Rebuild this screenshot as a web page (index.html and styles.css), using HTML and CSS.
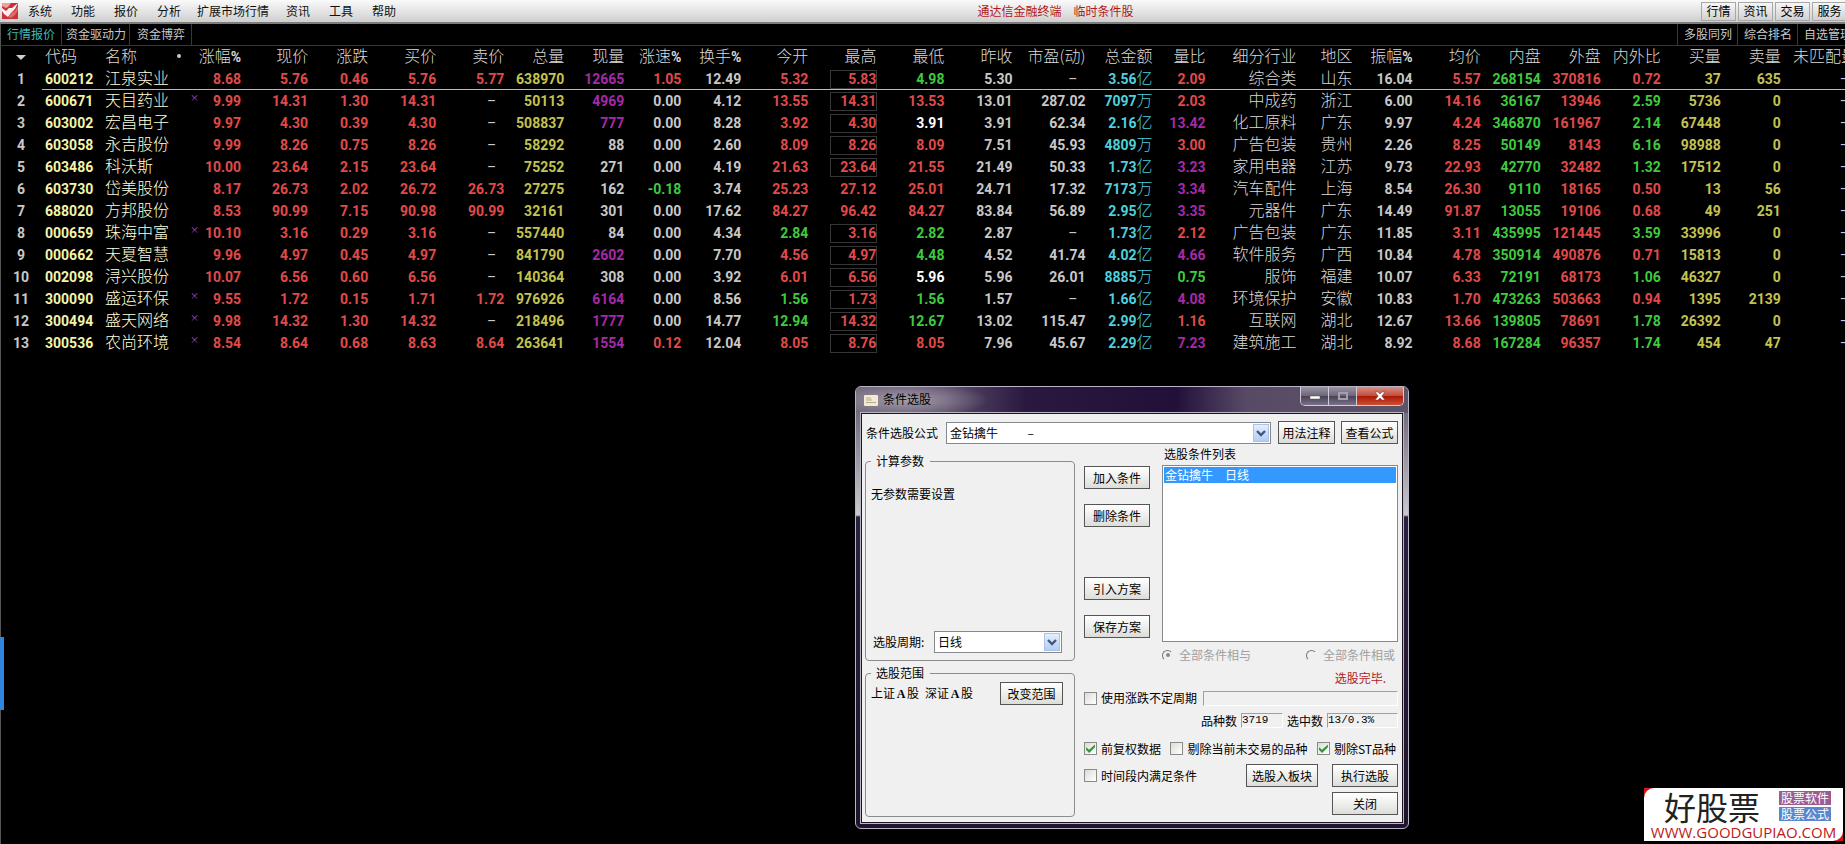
FILE: index.html
```html
<!DOCTYPE html>
<html lang="zh-CN">
<head>
<meta charset="utf-8">
<title>通达信金融终端 临时条件股</title>
<link rel="stylesheet" href="styles.css">
</head>
<body>
<header class="topbar">
  <svg class="logo" viewBox="0 0 16 16" aria-hidden="true"><rect width="16" height="16" fill="#c8333a"/><path d="M0 0h9L6 4 4 5 0 3z" fill="#e9a3a3"/><path d="M0 5l4 3 3-3 3 0 6-5-3 6-4 4-3 4-4-3-2-3z" fill="#fbeeee"/><path d="M6 14l3-4 4-2 3-5v4l-3 5-4 3z" fill="#e06a6a"/></svg>
  <nav class="menu">
    <a href="#">系统</a><a href="#">功能</a><a href="#">报价</a><a href="#">分析</a><a class="market" href="#">扩展市场行情</a><a href="#">资讯</a><a href="#">工具</a><a href="#">帮助</a>
  </nav>
  <div class="caption"><span>通达信金融终端</span><span>临时条件股</span></div>
  <div class="quick">
    <button type="button">行情</button><button type="button">资讯</button><button type="button">交易</button><button type="button">服务</button>
  </div>
</header>
<nav class="tabs">
  <div class="tabs-left"><a class="active" href="#">行情报价</a><a href="#">资金驱动力</a><a href="#">资金博弈</a></div>
  <div class="tabs-right"><a href="#">多股同列</a><a href="#">综合排名</a><a href="#">自选管理</a></div>
</nav>
<main class="desk">
<table class="quotes">
<colgroup><col class="w42"><col class="w60"><col class="w97"><col class="w42"><col class="w67"><col class="w60"><col class="w68"><col class="w68"><col class="w60"><col class="w60"><col class="w57"><col class="w60"><col class="w67"><col class="w68"><col class="w68"><col class="w68"><col class="w73"><col class="w67"><col class="w53"><col class="w91"><col class="w56"><col class="w60"><col class="w68"><col class="w60"><col class="w60"><col class="w60"><col class="w60"><col class="w60"><col class="w76"></colgroup>
<thead><tr><th><i class="tri"></i></th><th>代码</th><th>名称<i class="dot"></i></th><th>涨幅<b>%</b></th><th>现价</th><th>涨跌</th><th>买价</th><th>卖价</th><th>总量</th><th>现量</th><th>涨速<b>%</b></th><th>换手<b>%</b></th><th>今开</th><th>最高</th><th>最低</th><th>昨收</th><th>市盈(动)</th><th>总金额</th><th>量比</th><th>细分行业</th><th>地区</th><th>振幅<b>%</b></th><th>均价</th><th>内盘</th><th>外盘</th><th>内外比</th><th>买量</th><th>卖量</th><th>未匹配量</th></tr></thead>
<tbody>
<tr class="current"><td>1</td><td>600212</td><td>江泉实业</td><td>8.68</td><td>5.76</td><td>0.46</td><td>5.76</td><td>5.77</td><td>638970</td><td class="m">12665</td><td class="r">1.05</td><td>12.49</td><td>5.32</td><td><span class="box">5.83</span></td><td class="g">4.98</td><td>5.30</td><td class="d">–</td><td>3.56<i>亿</i></td><td>2.09</td><td>综合类</td><td>山东</td><td>16.04</td><td>5.57</td><td>268154</td><td>370816</td><td class="r">0.72</td><td>37</td><td>635</td><td class="d">–</td></tr>
<tr><td>2</td><td>600671</td><td>天目药业<sup>×</sup></td><td>9.99</td><td>14.31</td><td>1.30</td><td>14.31</td><td class="d">–</td><td>50113</td><td class="m">4969</td><td>0.00</td><td>4.12</td><td>13.55</td><td><span class="box">14.31</span></td><td>13.53</td><td>13.01</td><td>287.02</td><td>7097<i>万</i></td><td>2.03</td><td>中成药</td><td>浙江</td><td>6.00</td><td>14.16</td><td>36167</td><td>13946</td><td>2.59</td><td>5736</td><td>0</td><td class="d">–</td></tr>
<tr><td>3</td><td>603002</td><td>宏昌电子</td><td>9.97</td><td>4.30</td><td>0.39</td><td>4.30</td><td class="d">–</td><td>508837</td><td class="m">777</td><td>0.00</td><td>8.28</td><td>3.92</td><td><span class="box">4.30</span></td><td class="w">3.91</td><td>3.91</td><td>62.34</td><td>2.16<i>亿</i></td><td class="m">13.42</td><td>化工原料</td><td>广东</td><td>9.97</td><td>4.24</td><td>346870</td><td>161967</td><td>2.14</td><td>67448</td><td>0</td><td class="d">–</td></tr>
<tr><td>4</td><td>603058</td><td>永吉股份</td><td>9.99</td><td>8.26</td><td>0.75</td><td>8.26</td><td class="d">–</td><td>58292</td><td>88</td><td>0.00</td><td>2.60</td><td>8.09</td><td><span class="box">8.26</span></td><td>8.09</td><td>7.51</td><td>45.93</td><td>4809<i>万</i></td><td>3.00</td><td>广告包装</td><td>贵州</td><td>2.26</td><td>8.25</td><td>50149</td><td>8143</td><td>6.16</td><td>98988</td><td>0</td><td class="d">–</td></tr>
<tr><td>5</td><td>603486</td><td>科沃斯</td><td>10.00</td><td>23.64</td><td>2.15</td><td>23.64</td><td class="d">–</td><td>75252</td><td>271</td><td>0.00</td><td>4.19</td><td>21.63</td><td><span class="box">23.64</span></td><td>21.55</td><td>21.49</td><td>50.33</td><td>1.73<i>亿</i></td><td class="m">3.23</td><td>家用电器</td><td>江苏</td><td>9.73</td><td>22.93</td><td>42770</td><td>32482</td><td>1.32</td><td>17512</td><td>0</td><td class="d">–</td></tr>
<tr><td>6</td><td>603730</td><td>岱美股份</td><td>8.17</td><td>26.73</td><td>2.02</td><td>26.72</td><td>26.73</td><td>27275</td><td>162</td><td class="g">-0.18</td><td>3.74</td><td>25.23</td><td>27.12</td><td>25.01</td><td>24.71</td><td>17.32</td><td>7173<i>万</i></td><td class="m">3.34</td><td>汽车配件</td><td>上海</td><td>8.54</td><td>26.30</td><td>9110</td><td>18165</td><td class="r">0.50</td><td>13</td><td>56</td><td class="d">–</td></tr>
<tr><td>7</td><td>688020</td><td>方邦股份</td><td>8.53</td><td>90.99</td><td>7.15</td><td>90.98</td><td>90.99</td><td>32161</td><td>301</td><td>0.00</td><td>17.62</td><td>84.27</td><td>96.42</td><td>84.27</td><td>83.84</td><td>56.89</td><td>2.95<i>亿</i></td><td class="m">3.35</td><td>元器件</td><td>广东</td><td>14.49</td><td>91.87</td><td>13055</td><td>19106</td><td class="r">0.68</td><td>49</td><td>251</td><td class="d">–</td></tr>
<tr><td>8</td><td>000659</td><td>珠海中富<sup>×</sup></td><td>10.10</td><td>3.16</td><td>0.29</td><td>3.16</td><td class="d">–</td><td>557440</td><td>84</td><td>0.00</td><td>4.34</td><td class="g">2.84</td><td><span class="box">3.16</span></td><td class="g">2.82</td><td>2.87</td><td class="d">–</td><td>1.73<i>亿</i></td><td>2.12</td><td>广告包装</td><td>广东</td><td>11.85</td><td>3.11</td><td>435995</td><td>121445</td><td>3.59</td><td>33996</td><td>0</td><td class="d">–</td></tr>
<tr><td>9</td><td>000662</td><td>天夏智慧</td><td>9.96</td><td>4.97</td><td>0.45</td><td>4.97</td><td class="d">–</td><td>841790</td><td class="m">2602</td><td>0.00</td><td>7.70</td><td>4.56</td><td><span class="box">4.97</span></td><td class="g">4.48</td><td>4.52</td><td>41.74</td><td>4.02<i>亿</i></td><td class="m">4.66</td><td>软件服务</td><td>广西</td><td>10.84</td><td>4.78</td><td>350914</td><td>490876</td><td class="r">0.71</td><td>15813</td><td>0</td><td class="d">–</td></tr>
<tr><td>10</td><td>002098</td><td>浔兴股份</td><td>10.07</td><td>6.56</td><td>0.60</td><td>6.56</td><td class="d">–</td><td>140364</td><td>308</td><td>0.00</td><td>3.92</td><td>6.01</td><td><span class="box">6.56</span></td><td class="w">5.96</td><td>5.96</td><td>26.01</td><td>8885<i>万</i></td><td class="g">0.75</td><td>服饰</td><td>福建</td><td>10.07</td><td>6.33</td><td>72191</td><td>68173</td><td>1.06</td><td>46327</td><td>0</td><td class="d">–</td></tr>
<tr><td>11</td><td>300090</td><td>盛运环保<sup>×</sup></td><td>9.55</td><td>1.72</td><td>0.15</td><td>1.71</td><td>1.72</td><td>976926</td><td class="m">6164</td><td>0.00</td><td>8.56</td><td class="g">1.56</td><td><span class="box">1.73</span></td><td class="g">1.56</td><td>1.57</td><td class="d">–</td><td>1.66<i>亿</i></td><td class="m">4.08</td><td>环境保护</td><td>安徽</td><td>10.83</td><td>1.70</td><td>473263</td><td>503663</td><td class="r">0.94</td><td>1395</td><td>2139</td><td class="d">–</td></tr>
<tr><td>12</td><td>300494</td><td>盛天网络<sup>×</sup></td><td>9.98</td><td>14.32</td><td>1.30</td><td>14.32</td><td class="d">–</td><td>218496</td><td class="m">1777</td><td>0.00</td><td>14.77</td><td class="g">12.94</td><td><span class="box">14.32</span></td><td class="g">12.67</td><td>13.02</td><td>115.47</td><td>2.99<i>亿</i></td><td>1.16</td><td>互联网</td><td>湖北</td><td>12.67</td><td>13.66</td><td>139805</td><td>78691</td><td>1.78</td><td>26392</td><td>0</td><td class="d">–</td></tr>
<tr><td>13</td><td>300536</td><td>农尚环境<sup>×</sup></td><td>8.54</td><td>8.64</td><td>0.68</td><td>8.63</td><td>8.64</td><td>263641</td><td class="m">1554</td><td class="r">0.12</td><td>12.04</td><td>8.05</td><td><span class="box">8.76</span></td><td>8.05</td><td>7.96</td><td>45.67</td><td>2.29<i>亿</i></td><td class="m">7.23</td><td>建筑施工</td><td>湖北</td><td>8.92</td><td>8.68</td><td>167284</td><td>96357</td><td>1.74</td><td>454</td><td>47</td><td class="d">–</td></tr>
</tbody>
</table>
</main>
<div class="side-handle"></div>

<section class="dialog" role="dialog" aria-labelledby="dlg-title">
  <header class="titlebar">
    <svg class="dlg-icon" viewBox="0 0 14 11" aria-hidden="true"><rect width="14" height="11" rx="1" fill="#f4ead2"/><path d="M2 3h5M2 5h6M2 7.500h10" stroke="#b9a888" fill="none"/></svg>
    <h1 id="dlg-title">条件选股</h1>
    <div class="winbtns">
      <button type="button" class="min" aria-label="最小化"><svg viewBox="0 0 12 10"><rect x="1" y="5" width="10" height="3" fill="#fff" stroke="#554" stroke-width=".5"/></svg></button>
      <button type="button" class="max" aria-label="最大化"><svg viewBox="0 0 12 10"><rect x="2" y="2" width="8" height="6" fill="none" stroke="#a39fa9" stroke-width="2"/></svg></button>
      <button type="button" class="close" aria-label="关闭窗口"><svg viewBox="0 0 12 10"><path d="M1 1h3l2 2 2-2h3L7.800 5 11 9H8L6 7 4 9H1l3.200-4z" fill="#fff" stroke="#733" stroke-width=".5"/></svg></button>
    </div>
  </header>
  <form class="body">
    <div class="formula">
      <label for="formula">条件选股公式</label>
      <div class="combo"><select id="formula"><option>金钻擒牛&nbsp;&nbsp;&nbsp;&nbsp;&nbsp;&nbsp;&nbsp;&nbsp;&nbsp;&nbsp;&nbsp;–</option></select><span class="arrow"><svg viewBox="0 0 10 8"><path d="M1 2l4 4 4-4" fill="none" stroke="#41577c" stroke-width="2.400"/></svg></span></div>
      <button type="button">用法注释</button>
      <button type="button">查看公式</button>
    </div>
    <div class="columns">
      <div class="left">
        <fieldset class="params">
          <legend>计算参数</legend>
          <p>无参数需要设置</p>
          <div class="period"><label for="period">选股周期:</label>
          <div class="combo"><select id="period"><option>日线</option></select><span class="arrow"><svg viewBox="0 0 10 8"><path d="M1 2l4 4 4-4" fill="none" stroke="#41577c" stroke-width="2.400"/></svg></span></div></div>
        </fieldset>
        <fieldset class="range">
          <legend>选股范围</legend>
          <div class="range-row"><p>上证<b>A</b>股</p><p>深证<b>A</b>股</p><button type="button">改变范围</button></div>
        </fieldset>
      </div>
      <div class="right">
        <div class="picker">
          <div class="actions">
            <button type="button">加入条件</button><button type="button">删除条件</button><button type="button" class="apart">引入方案</button><button type="button">保存方案</button>
          </div>
          <div class="conditions">
            <h2>选股条件列表</h2>
            <ul><li><span>金钻擒牛</span><span>日线</span></li></ul>
            <div class="radios"><label><input type="radio" name="mode" checked disabled>全部条件相与</label><label><input type="radio" name="mode" disabled>全部条件相或</label></div>
          </div>
        </div>
        <p class="done">选股完毕.</p>
        <div class="cycle"><label><input type="checkbox">使用涨跌不定周期</label><output class="sunk wide"></output></div>
        <div class="counts"><span>品种数</span><output class="sunk total">3719</output><span>选中数</span><output class="sunk hits">13/0.3%</output></div>
        <div class="options"><label><input type="checkbox" checked>前复权数据</label><label><input type="checkbox">剔除当前未交易的品种</label><label><input type="checkbox" checked>剔除ST品种</label></div>
        <div class="run"><label><input type="checkbox">时间段内满足条件</label><button type="button" class="block">选股入板块</button><button type="button">执行选股</button></div>
        <div class="run end"><button type="button">关闭</button></div>
      </div>
    </div>
  </form>
</section>

<aside class="brand">
  <div class="brand-card">
    <div class="brand-top"><strong>好股票</strong><div class="tags"><span>股票软件</span><span>股票公式</span></div></div>
    <div class="url">WWW.GOODGUPIAO.COM</div>
  </div>
</aside>
</body>
</html>
```
FILE: styles.css
```css
* { box-sizing: border-box; }
html, body { margin: 0; height: 100%; }
body {
  background: #000;
  color: #c8c8c8;
  font: 12px/16px "Noto Sans CJK SC", sans-serif;
  overflow: hidden;
  position: relative;
}
a { color: inherit; text-decoration: none; }
button, select, input { font: inherit; color: #000; margin: 0; }
p, h1, h2, ul { margin: 0; padding: 0; font: inherit; list-style: none; }
i { font-style: normal; }

/* menu bar */
.topbar {
  display: flex;
  align-items: center;
  height: 24px;
  padding-left: 2px;
  background: linear-gradient(#fafafa, #cfcfcf);
  border-bottom: 2px solid #7c7c7c;
  color: #111;
  overflow: hidden;
}
.logo { width: 16px; height: 16px; }
.menu { display: flex; margin-left: 1px; }
.menu a { padding: 0 10px 0 9px; }
.menu .market { padding: 0 8px 0 6px; }
.caption { flex: 1; display: flex; justify-content: center; gap: 12px; padding-left: 4px; color: #b01818; }
.quick { display: flex; gap: 2px; margin-right: -2px; }
.quick button {
  width: 35px;
  height: 19px;
  padding: 0;
  line-height: 16px;
  border: 1px solid #a8a8a8;
  background: linear-gradient(#f6f6f6, #d0d0d0);
}

/* tab strip */
.tabs {
  display: flex;
  justify-content: space-between;
  height: 22px;
  border-left: 1px solid #555;
  border-bottom: 1px solid #7a1a1c;
  overflow: hidden;
}
.tabs-left, .tabs-right { display: flex; line-height: 20px; }
.tabs-left a { padding: 0 3px 0 4px; border-right: 1px solid #7a1a1c; }
.tabs-left a:first-child { padding: 0 6px; }
.tabs-left a:last-child { padding: 0 6px 0 7px; }
.tabs-right { margin-right: -12px; }
.tabs-right a { padding: 0 5px 0 6px; border-left: 1px solid #7a1a1c; }
.tabs .active { color: #3fb8b8; }

/* quote table */
.desk { border-left: 1px solid #555; height: calc(100% - 46px); overflow: hidden; }
.quotes {
  width: calc(100% + 13px);
  margin-left: -1px;
  table-layout: fixed;
  border-collapse: separate;
  border-spacing: 0;
  white-space: nowrap;
}
.w42 { width: 42px; } .w53 { width: 53px; } .w56 { width: 56px; } .w57 { width: 57px; }
.w60 { width: 60px; } .w67 { width: 67px; } .w68 { width: 68px; } .w73 { width: 73px; }
.w76 { width: 76px; } .w91 { width: 91px; } .w97 { width: 97px; }
.quotes th, .quotes td { padding: 0; text-align: right; height: 22px; line-height: 20px; }
.quotes th { height: 22px; line-height: 19px; vertical-align: top; font-size: 16px; font-weight: 300; color: #dadada; }
.quotes th:nth-child(4) { text-indent: -4px; }
.quotes th b { font: bold 14px/14px Roboto, sans-serif; }
.quotes td { font-family: Roboto, "Noto Sans CJK SC", sans-serif; font-size: 14px; font-weight: 700; }
.quotes td i { font-size: 16px; font-weight: 300; line-height: 16px; }
.quotes tr > :nth-child(1) { text-align: center; }
.quotes tr > :nth-child(2), .quotes tr > :nth-child(3) { text-align: left; padding-left: 3px; }
.quotes td:nth-child(2) { color: #f4f4a8; }
.quotes td:nth-child(3), .quotes td:nth-child(20), .quotes td:nth-child(21) { font-size: 16px; font-weight: 300; color: #dadada; }
.quotes td:nth-child(3) { color: #ffffdc; }
.quotes td:nth-child(n+4):nth-child(-n+8),
.quotes td:nth-child(n+13):nth-child(-n+15),
.quotes td:nth-child(19), .quotes td:nth-child(23), .quotes td:nth-child(25), .quotes td.r { color: #e24a4a; }
.quotes td:nth-child(9), .quotes td:nth-child(27), .quotes td:nth-child(28) { color: #c3c350; }
.quotes td:nth-child(18) { color: #4ed0dc; }
.quotes td:nth-child(24), .quotes td:nth-child(26) { color: #3ecb3e; }
.quotes td:nth-child(26).r { color: #e24a4a; }
.quotes td:nth-child(n).g { color: #3ecb3e; }
.quotes td:nth-child(n).m { color: #a828a8; }
.quotes td:nth-child(n).w { color: #fff; }
.quotes td:nth-child(n).d { color: #c8c8c8; padding-right: 8px; font-weight: 400; }
.current td:nth-child(n+2) { border-bottom: 1px solid #c0c090; }
.quotes sup { float: right; font: 9px/13px "Noto Sans CJK SC", sans-serif; color: #b84cc8; }
.box { display: inline-block; width: 47px; height: 19px; margin-right: -1px; line-height: 17px; border: 1px solid #363636; vertical-align: middle; }
.tri { display: inline-block; border: 5px solid transparent; border-top-color: #d0d0d0; border-bottom: 0; vertical-align: middle; }
.dot { float: right; width: 4px; height: 4px; margin: 8px 18px 0 0; border-radius: 2px; background: #c8c8c8; }

.side-handle { position: absolute; left: 0; top: 637px; width: 4px; height: 73px; background: #2f86dc; }

/* dialog window */
.dialog {
  position: absolute;
  left: 855px;
  top: 386px;
  width: 554px;
  padding: 0 5px 5px;
  border: 1px solid #bab4c6;
  border-radius: 6px;
  background: linear-gradient(#5c5468, #77707f 30px, #c9c9d0 128px, #2a2040 130px, #1e142c);
  color: #000;
}
.titlebar {
  display: flex;
  align-items: flex-start;
  height: 26px;
  margin: 0 -5px;
  padding: 0 4px 0 8px;
  border-radius: 5px 5px 0 0;
  background:
    radial-gradient(ellipse 80px 18px at 52px 13px, #b4aebbcc, #b4aebb00),
    linear-gradient(90deg, #6d6678, #5a4d68 90px, #2a1840 170px, #22103a 320px, #584a66 390px, #5c5468);
}
.dlg-icon { width: 14px; height: 11px; margin-top: 8px; }
.titlebar h1 { flex: 1; margin: 4px 0 0 5px; }
.winbtns { display: flex; border: 1px solid #d0ccd6; border-top: 0; border-radius: 0 0 5px 5px; overflow: hidden; }
.winbtns button { width: 28px; height: 18px; padding: 0; border: 0; border-right: 1px solid #d0ccd6; background: linear-gradient(#9a94a4, #6c6478 50%, #4a4058 51%, #7a7288); line-height: 0; }
.winbtns .close { width: 46px; border-right: 0; background: linear-gradient(#d89084, #c04a38 50%, #a81808 51%, #d05030); }
.winbtns svg { width: 12px; height: 10px; }
.body {
  padding: 6px 4px 5px 3px;
  border: 1px solid #1c1424;
  outline: 1px solid #b8b4c0;
  background: #f0f0f0;
}
.body button {
  height: 23px;
  padding: 0;
  border: 1px solid #555;
  background: linear-gradient(#fff, #f2f2f0 40%, #dcdcd8);
  line-height: 20px;
}
.combo { display: grid; height: 22px; border: 1px solid #84898e; background: #fff; }
.combo select { grid-area: 1 / 1; width: 100%; padding: 0 3px; border: 0; background: none; appearance: none; }
.arrow {
  grid-area: 1 / 1;
  justify-self: end;
  align-self: center;
  display: grid;
  place-items: center;
  width: 16px;
  height: 18px;
  margin-right: 1px;
  border: 1px solid #a9c3ea;
  background: linear-gradient(#e4eefc, #b4cdf2);
  pointer-events: none;
}
.arrow svg { width: 10px; height: 8px; }
.formula { display: flex; align-items: center; gap: 6px; padding-left: 1px; height: 25px; }
.formula .combo { flex: 1; margin: 1px 1px 0 2px; }
.formula button { width: 57px; }
.columns { display: grid; grid-template-columns: 210px 1fr; gap: 9px; }
.left { display: flex; flex-direction: column; gap: 4px; padding-top: 8px; }
fieldset { margin: 0; padding: 0 5px; border: 1px solid #8c8c8c; border-radius: 4px; min-width: 0; }
legend { height: 16px; padding: 0 6px 0 5px; }
.params { display: flex; flex-direction: column; height: 208px; }
.params p { margin-top: 17px; }
.period { display: flex; align-items: center; gap: 4px; margin-top: 129px; padding: 0 7px 0 2px; }
.period .combo { flex: 0 0 128px; margin-left: auto; }
.range { height: 152px; }
.range-row { display: flex; align-items: center; gap: 6px; margin-top: 1px; }
.range-row b { display: inline-block; width: 12px; text-align: center; font: bold 12px "Liberation Serif", serif; }
.range-row button { width: 63px; margin-left: auto; margin-right: 6px; }
.picker { display: grid; grid-template-columns: 66px 1fr; gap: 12px; }
.actions { display: flex; flex-direction: column; gap: 15px; padding-top: 21px; }
.actions .apart { margin-top: 35px; }
.conditions h2 { height: 20px; padding: 1px 0 0 2px; }
.conditions ul { height: 177px; padding: 1px; border: 1px solid #84898e; background: #fff; }
.conditions li { display: flex; gap: 12px; padding-left: 1px; background: #3399ff; color: #fff; }
.radios { display: flex; justify-content: space-between; align-items: center; height: 26px; padding-right: 3px; color: #a0a0a0; }
label { white-space: nowrap; }
.right label { display: flex; align-items: center; }
.right input { appearance: none; flex: none; display: grid; place-items: center; width: 13px; height: 13px; margin-right: 4px; border: 1px solid #8a8a86; background: linear-gradient(135deg, #dcdcd6, #fff); }
.right input[type="radio"] { width: 11px; height: 11px; margin-right: 6px; border-radius: 50%; border-color: #777 #f0f0f0 #f0f0f0 #777; background: #f0f0f0; }
.right input[type="radio"]:checked::before { content: ""; width: 4px; height: 4px; border-radius: 50%; background: #888; }
.right input[type="checkbox"]:checked::before { content: ""; width: 9px; height: 9px; background: #2f9a35; clip-path: polygon(0 35%, 0 65%, 35% 100%, 100% 35%, 100% 5%, 35% 65%); }
.done { height: 20px; padding: 2px 12px 0 0; text-align: right; color: #b02020; }
.cycle, .counts, .options, .run { display: flex; align-items: center; }
.cycle { height: 20px; gap: 6px; }
.sunk { height: 15px; line-height: 13px; border: 1px solid; border-color: #a0a0a0 #fff #fff #a0a0a0; font-family: "Liberation Mono", monospace; font-size: 11px; }
.wide { flex: 1; }
.counts { height: 25px; justify-content: flex-end; gap: 4px; }
.total { width: 42px; }
.hits { width: 71px; }
.options { height: 31px; justify-content: space-between; padding-right: 2px; }
.run { height: 23px; gap: 14px; }
.run button { width: 66px; }
.run .block { width: 72px; margin-left: auto; }
.run.end { height: 29px; justify-content: flex-end; padding-top: 4px; }

/* site badge */
.brand {
  position: absolute;
  right: 2px;
  bottom: 3px;
  width: 199px;
  background: linear-gradient(135deg, #d01818 12px, #000 12px, #000 calc(100% - 12px), #d01818 calc(100% - 12px));
}
.brand-card { border-radius: 10px 0 10px 0; background: #fff; padding-bottom: 1px; }
.brand-top { display: flex; justify-content: space-between; align-items: center; padding: 0 12px 0 20px; height: 36px; }
.brand strong { font-size: 32px; line-height: 32px; font-weight: 400; color: #222; }
.tags { display: grid; gap: 2px; color: #fff; line-height: 14px; }
.tags span { padding: 0 2px; background: #9c5c92; }
.tags span + span { background: #5b86cc; }
.url { color: #c01818; font: 15px/16px "Open Sans", sans-serif; text-align: center; }
```
